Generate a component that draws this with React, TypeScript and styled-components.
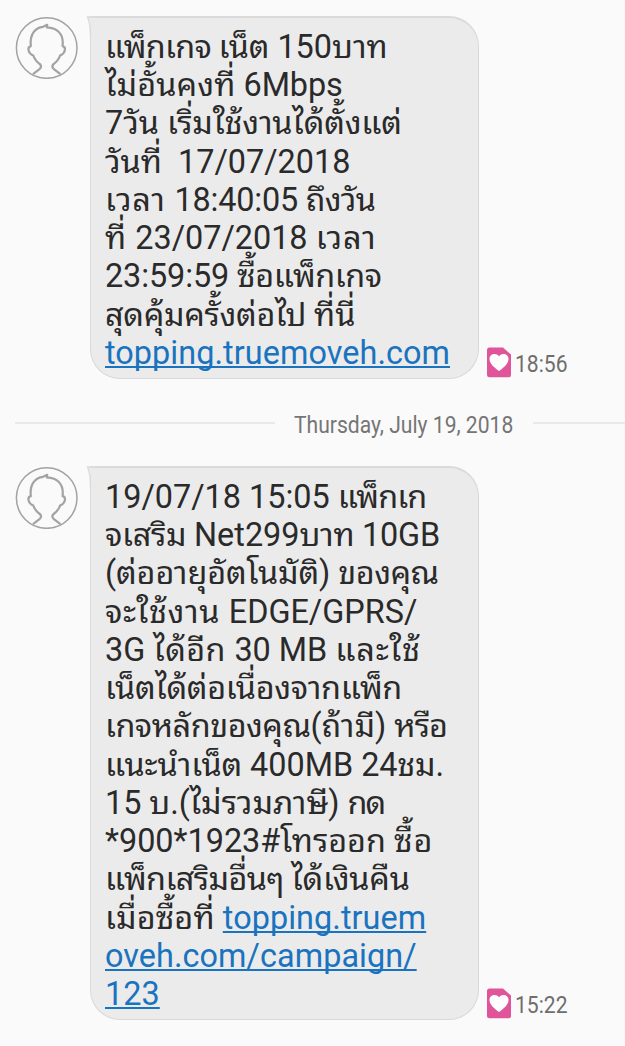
import React from "react";
import styled, { createGlobalStyle } from "styled-components";

const GlobalStyle = createGlobalStyle`
  * { box-sizing: border-box; }
  body {
    margin: 0;
    background: #fafafa;
    color: #2a2a2a;
    font-family: Roboto, "Noto Sans Thai Looped", "Noto Sans", sans-serif;
    overflow: hidden;
  }
`;

const Thread = styled.main`
  display: flex;
  flex-direction: column;
  width: 625px;
  height: 1046px;
  padding-top: 16px;
  background: #fafafa;
`;

const MessageRow = styled.section`
  display: flex;
  align-items: flex-start;
  padding-left: 15px;
`;

const Avatar = styled.svg`
  flex: none;
  width: 63px;
  height: 63px;
  margin-right: 12px;
`;

const Bubble = styled.div<{ $height: number }>`
  position: relative;
  flex: none;
  width: 389px;
  height: ${(p) => p.$height}px;
  padding: 9.8px 0 0 14px;
  background: #ebebeb;
  border: 1px solid #d9d9d9;
  border-top: 2px solid #dadada;
  border-radius: 0 30px 30px 30px;
`;

const Tail = styled.svg`
  position: absolute;
  left: -4px;
  top: -2px;
  width: 8px;
  height: 22px;
`;

const Line = styled.div`
  height: 38.27px;
  line-height: 38.27px;
  font-size: 32.4px;
  white-space: pre;
`;

const Run = styled.span<{ $spacing: number }>`
  letter-spacing: ${(p) => p.$spacing}px;
`;

const Link = styled.a`
  color: #1a73bf;
  letter-spacing: 0.06px;
  text-decoration: underline;
  text-decoration-thickness: 2px;
  text-decoration-skip-ink: none;
  text-underline-offset: 2px;
`;

const Meta = styled.div`
  display: flex;
  align-items: center;
  align-self: flex-end;
  height: 32px;
  margin: 0 0 1px 8px;
  gap: 4px;
`;

const SimIcon = styled.svg`
  width: 24px;
  height: 31px;
`;

const Time = styled.time`
  font-size: 24.5px;
  line-height: 31px;
  color: #6e6e6e;
  transform: translateY(1px) scaleX(0.86);
  transform-origin: left center;
`;

const DateDivider = styled.div`
  display: flex;
  align-items: center;
  height: 87px;
  padding-left: 15px;
`;

const Rule = styled.span<{ $width: number }>`
  flex: none;
  width: ${(p) => p.$width}px;
  height: 2px;
  background: #e9e9e9;
`;

const DateBox = styled.span`
  flex: none;
  display: flex;
  width: 258px;
  padding: 4px 0 0 19px;
`;

const DateText = styled.span`
  flex: none;
  font-size: 24.5px;
  line-height: 30px;
  color: #757575;
  white-space: nowrap;
  transform: scaleX(0.86);
  transform-origin: left center;
`;

const Person = () => (
  <Avatar viewBox="0 0 63 63" fill="none" stroke="#a3a3a3">
    <circle cx="31.7" cy="32" r="30.3" strokeWidth="1.5" />
    <path
      d="M18 58.2L24.8 52.8Q27 50.8 25.3 48.5C22 46 19.500 43.500 18.300 39.500C12.800 37.500 12 31 15.800 30.200C14.500 18 20.500 11.500 28 10.800L32.200 8.800L31.800 11.400C42.500 11.800 49 18 47.600 30.200C51.400 31 50.600 37.500 45.100 39.500C43.900 43.500 41.400 46 38.100 48.500Q36.400 50.800 38.600 52.800L45.400 58.200"
      strokeWidth="2.2"
      strokeLinejoin="round"
    />
  </Avatar>
);

const BubbleTail = () => (
  <Tail viewBox="0 0 8 22">
    <path d="M0.5 1H8V22H4C4 13 3.5 7 0.5 1Z" fill="#ebebeb" />
    <path d="M8 1H0.5C3 6 3.5 13 3.5 22" fill="none" stroke="#dadada" strokeWidth="1.3" />
  </Tail>
);

const Stamp = ({ time }: { time: string }) => (
  <Meta>
    <SimIcon viewBox="0 0 24 31">
      <path d="M2.500 0.500H16L24 7.500V28Q24 30.300 22 30.300H2.500Q0 30.300 0 28V3Q0 0.500 2.500 0.500Z" fill="#e0559a" />
      <path d="M12 24C7 20.500 2.500 16.500 2.500 12C2.500 6.500 9.500 5.500 12 9.500C14.500 5.500 21.500 6.500 21.500 12C21.500 16.500 17 20.500 12 24Z" fill="#fff" />
    </SimIcon>
    <Time>{time}</Time>
  </Meta>
);

type TextRun = [text: string, spacing: number];
type TextLine = { runs?: TextRun[]; link?: string };

const first: TextLine[] = [
  { runs: [["แพ็กเกจ ", -0.7], ["เน็ต ", -0.1], ["150บาท", 0]] },
  { runs: [["ไม่อั้นคงที่ ", 0.1], ["6Mbps", -0.1]] },
  { runs: [["7วัน ", 0], ["เริ่มใช้งานได้ตั้งแต่", -0.2]] },
  { runs: [["วันที่  17/07/2018", 0]] },
  { runs: [["เวลา ", 0.8], ["18:40:05 ", -0.2], ["ถึงวัน", -0.7]] },
  { runs: [["ที่ ", 0.5], ["23/07/2018 ", 0], ["เวลา", 0.8]] },
  { runs: [["23:59:59 ", -0.1], ["ซื้อแพ็กเกจ", -0.4]] },
  { runs: [["สุดคุ้มครั้งต่อไป ", -0.3], ["ที่นี่", 0]] },
  { link: "topping.truemoveh.com" },
];

const second: TextLine[] = [
  { runs: [["19/07/18 15:05 ", 0], ["แพ็กเก", -0.9]] },
  { runs: [["จเสริม ", -0.3], ["Net299", 0], ["บาท ", -0.3], ["10GB", -0.2]] },
  { runs: [["(ต่ออายุอัตโนมัติ) ", -0.1], ["ของคุณ", -0.5]] },
  { runs: [["จะใช้งาน ", 0.6], ["EDGE/GPRS/", 0]] },
  { runs: [["3G ", 0], ["ได้อีก ", 0.4], ["30 MB ", 0], ["และใช้", 0.8]] },
  { runs: [["เน็ตได้ต่อเนื่องจากแพ็ก", -0.3]] },
  { runs: [["เกจหลักของคุณ", -0.5], ["(ถ้ามี) ", 0], ["หรือ", -1]] },
  { runs: [["แนะนำเน็ต ", -0.1], ["400MB ", 0], ["24ชม.", -0.2]] },
  { runs: [["15 บ.(ไม่รวมภาษี) ", -0.05], ["กด", -1.8]] },
  { runs: [["*900*1923#", 0], ["โทรออก ", 0], ["ซื้อ", 0.8]] },
  { runs: [["แพ็กเสริมอื่นๆ ", -0.6], ["ได้เงินคืน", -0.2]] },
  { runs: [["เมื่อซื้อที่ ", 0.1]], link: "topping.truem" },
  { link: "oveh.com/campaign/" },
  { link: "123" },
];

const Message = ({ lines, height, time }: { lines: TextLine[]; height: number; time: string }) => (
  <MessageRow>
    <Person />
    <Bubble $height={height}>
      <BubbleTail />
      {lines.map((line, i) => (
        <Line key={i}>
          {line.runs?.map(([text, spacing], j) => (
            <Run key={j} $spacing={spacing}>{text}</Run>
          ))}
          {line.link && <Link>{line.link}</Link>}
        </Line>
      ))}
    </Bubble>
    <Stamp time={time} />
  </MessageRow>
);

export default function App() {
  return (
    <>
      <GlobalStyle />
      <Thread>
        <Message lines={first} height={363} time="18:56" />
        <DateDivider>
          <Rule $width={260} />
          <DateBox>
            <DateText>Thursday, July 19, 2018</DateText>
          </DateBox>
          <Rule $width={92} />
        </DateDivider>
        <Message lines={second} height={554} time="15:22" />
      </Thread>
    </>
  );
}
